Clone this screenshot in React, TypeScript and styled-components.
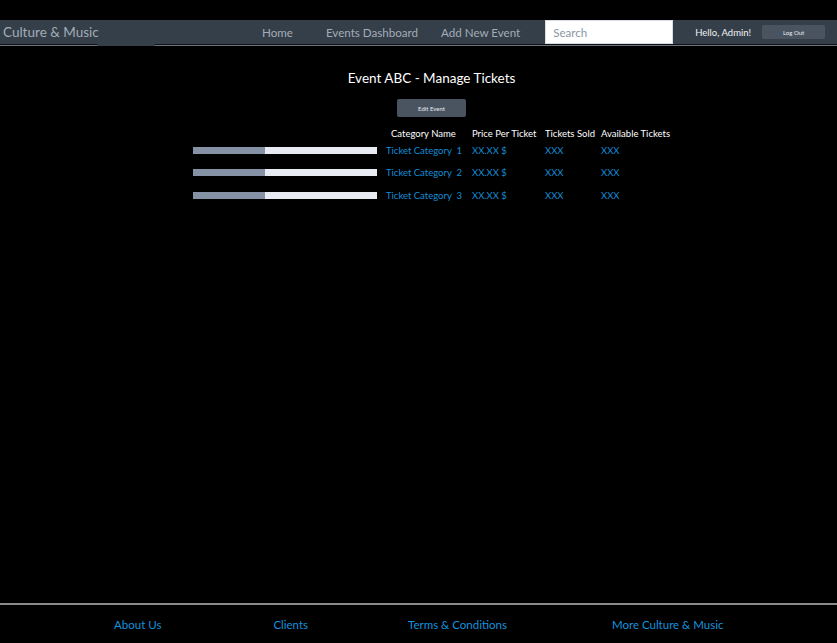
import React from 'react'
import styled, { createGlobalStyle } from 'styled-components'

const GlobalStyle = createGlobalStyle`
  html, body {
    margin: 0;
    padding: 0;
    background: #000;
  }
  body {
    font-family: Lato, 'Open Sans', sans-serif;
  }
`

const Page = styled.div`
  min-height: 643px;
  display: flex;
  flex-direction: column;
  background: #000;
  padding-top: 20px;
  box-sizing: border-box;
`

const NavBar = styled.div`
  height: 24px;
  background: #353f4a;
  display: flex;
  align-items: center;
  border-bottom: 1px solid #0d1014;
  box-shadow: 0 1px 0 #6d7480;
  position: relative;
`

const Brand = styled.div`
  width: 259px;
  padding-left: 3px;
  font-size: 13.5px;
  color: #a3acb7;
  white-space: nowrap;
  position: relative;
  &::after {
    content: '';
    position: absolute;
    left: 97px;
    width: 58px;
    bottom: -6px;
    height: 2px;
    background: #353f4a;
  }
`

const NavLink = styled.a<{ $gap: number }>`
  margin-right: ${({ $gap }) => $gap}px;
  font-size: 11.6px;
  color: #a3acb7;
  text-decoration: none;
  white-space: nowrap;
`

const Search = styled.input`
  width: 128px;
  height: 24px;
  box-sizing: border-box;
  border: 1px solid #d8dde3;
  padding: 0 7px;
  font-family: Lato, sans-serif;
  font-size: 11.5px;
  color: #333;
  background: #fff;
  outline: none;
  &::placeholder {
    color: #8996a4;
  }
`

const Hello = styled.span`
  margin-left: 22px;
  font-size: 9.5px;
  font-weight: 400;
  color: #f2f2f2;
  white-space: nowrap;
`

const LogOutWrap = styled.span`
  margin-left: 11px;
  display: flex;
`

const SmallButton = styled.button<{ $w: number; $h: number }>`
  width: ${({ $w }) => $w}px;
  height: ${({ $h }) => $h}px;
  background: #4a5461;
  border: none;
  border-radius: 2px;
  color: #e6e9ee;
  font-family: Lato, sans-serif;
  font-size: 6px;
  padding: 0;
  cursor: pointer;
`

const Main = styled.main`
  flex: 1;
  display: flex;
  flex-direction: column;
  align-items: center;
  padding-top: 25px;
  padding-left: 26px;
`

const Title = styled.h1`
  margin: 0;
  font-size: 13.5px;
  font-weight: 400;
  color: #fff;
  line-height: 17px;
`

const EditWrap = styled.div`
  margin-top: 12px;
  display: flex;
`

const Table = styled.div`
  align-self: flex-start;
  margin-left: 167px;
  margin-top: 8px;
  display: grid;
  grid-template-columns: 193px 86px 73px 56px 90px;
  align-items: center;
  font-size: 9.5px;
`

const HeadCell = styled.div<{ $pad?: number }>`
  color: #fff;
  white-space: nowrap;
  height: 17px;
  line-height: 17px;
  padding-left: ${({ $pad }) => $pad ?? 0}px;
`

const Cell = styled.div<{ $h: number }>`
  height: ${({ $h }) => $h}px;
  display: flex;
  align-items: center;
  color: #138dd6;
  white-space: nowrap;
`

const Bar = styled.div`
  width: 184px;
  height: 7px;
  background: #e8ebf2;
  display: flex;
`

const BarFill = styled.div`
  height: 100%;
  background: #8591a4;
`

const Footer = styled.footer`
  border-top: 2px solid #8a8a8a;
  height: 40px;
  box-sizing: border-box;
  display: flex;
  align-items: center;
  padding-top: 0;
`

const FooterLink = styled.a<{ $ml: number }>`
  margin-left: ${({ $ml }) => $ml}px;
  font-size: 11.5px;
  color: #1592dc;
  text-decoration: none;
  white-space: nowrap;
`

const rows = [
  { n: 1, h: 17 },
  { n: 2, h: 26 },
  { n: 3, h: 20 },
]

export default function App() {
  return (
    <>
      <GlobalStyle />
      <Page>
        <NavBar>
          <Brand>Culture &amp; Music</Brand>
          <NavLink $gap={33}>Home</NavLink>
          <NavLink $gap={23}>Events Dashboard</NavLink>
          <NavLink $gap={25}>Add New Event</NavLink>
          <Search placeholder="Search" />
          <Hello>Hello, Admin!</Hello>
          <LogOutWrap>
            <SmallButton $w={63} $h={14}>Log Out</SmallButton>
          </LogOutWrap>
        </NavBar>
        <Main>
          <Title>Event ABC - Manage Tickets</Title>
          <EditWrap>
            <SmallButton $w={69} $h={18}>Edit Event</SmallButton>
          </EditWrap>
          <Table>
            <HeadCell />
            <HeadCell $pad={5}>Category Name</HeadCell>
            <HeadCell>Price Per Ticket</HeadCell>
            <HeadCell>Tickets Sold</HeadCell>
            <HeadCell>Available Tickets</HeadCell>
            {rows.map((r) => (
              <React.Fragment key={r.n}>
                <Cell $h={r.h}>
                  <Bar>
                    <BarFill style={{ width: '39%' }} />
                  </Bar>
                </Cell>
                <Cell $h={r.h}>Ticket Category&nbsp; {r.n}</Cell>
                <Cell $h={r.h}>XX.XX $</Cell>
                <Cell $h={r.h}>XXX</Cell>
                <Cell $h={r.h}>XXX</Cell>
              </React.Fragment>
            ))}
          </Table>
        </Main>
        <Footer>
          <FooterLink $ml={114}>About Us</FooterLink>
          <FooterLink $ml={112}>Clients</FooterLink>
          <FooterLink $ml={100}>Terms &amp; Conditions</FooterLink>
          <FooterLink $ml={105}>More Culture &amp; Music</FooterLink>
        </Footer>
      </Page>
    </>
  )
}
